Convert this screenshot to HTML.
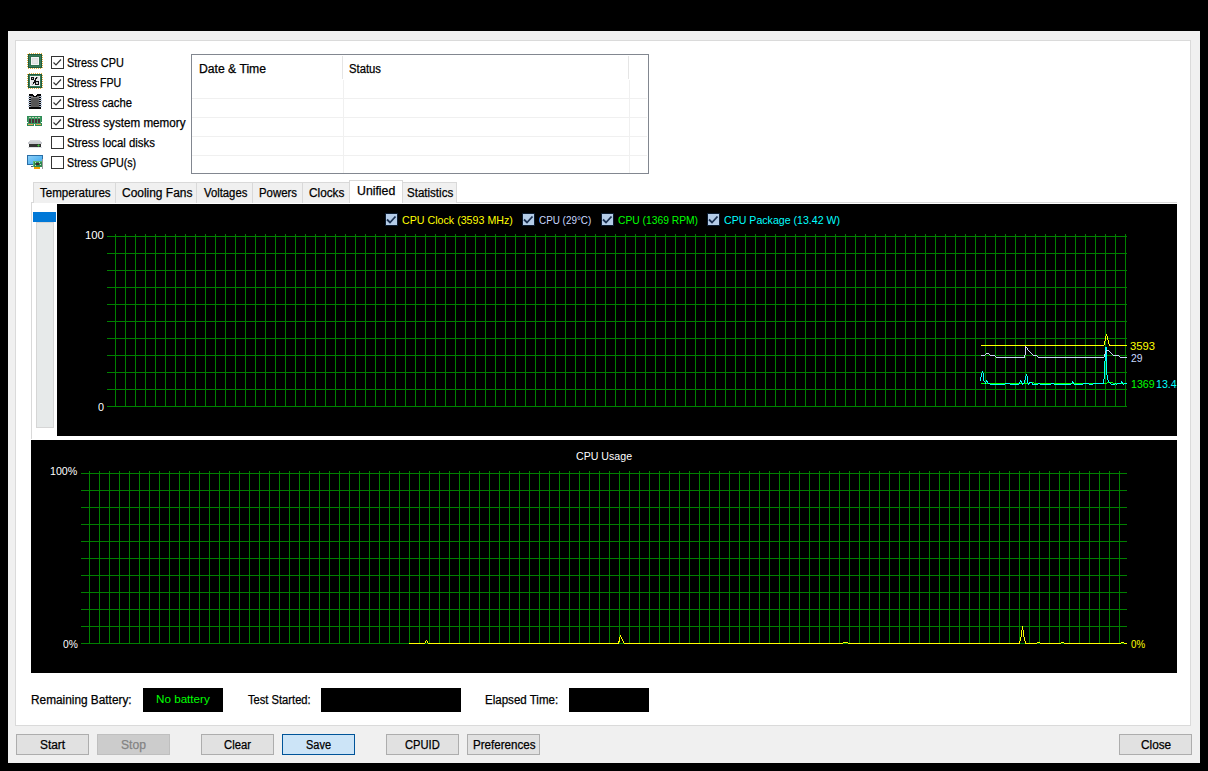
<!DOCTYPE html><html><head><meta charset="utf-8"><style>
html,body{margin:0;padding:0}
body{background:#000;width:1208px;height:771px;overflow:hidden;position:relative;font-family:"Liberation Sans", sans-serif}
.a{position:absolute;box-sizing:border-box}
.t{position:absolute;white-space:nowrap;line-height:15px;font-family:"Liberation Sans", sans-serif;transform-origin:0 0}
.cb{position:absolute;width:13px;height:13px;box-sizing:border-box;border:1px solid #333;background:#fff}
.btn{position:absolute;box-sizing:border-box;top:734px;width:73px;height:21px;border:1px solid #adadad;background:#e1e1e1}
.tab{position:absolute;box-sizing:border-box;top:182px;height:21px;border:1px solid #d9d9d9;border-bottom:none;background:#f0f0f0}
svg{position:absolute;left:0;top:0}
</style></head><body>

<div class="a" style="left:8px;top:31px;width:1192px;height:732px;background:#f0f0f0"></div>
<div class="a" style="left:15px;top:40px;width:1176px;height:686px;background:#fff;border:1px solid #dadada"></div>
<div class="cb" style="left:51px;top:56px"></div>
<div class="t" style="left:66.99px;top:56px;font-size:12px;color:#000;-webkit-text-stroke:0.25px currentColor;transform:scaleX(0.9066);">Stress CPU</div>
<div class="cb" style="left:51px;top:76px"></div>
<div class="t" style="left:67.02px;top:76px;font-size:12px;color:#000;-webkit-text-stroke:0.25px currentColor;transform:scaleX(0.8833);">Stress FPU</div>
<div class="cb" style="left:51px;top:96px"></div>
<div class="t" style="left:67.06px;top:96px;font-size:12px;color:#000;-webkit-text-stroke:0.25px currentColor;transform:scaleX(0.9368);">Stress cache</div>
<div class="cb" style="left:51px;top:116px"></div>
<div class="t" style="left:67.03px;top:116px;font-size:12px;color:#000;-webkit-text-stroke:0.25px currentColor;transform:scaleX(0.9711);">Stress system memory</div>
<div class="cb" style="left:51px;top:136px"></div>
<div class="t" style="left:67.05px;top:136px;font-size:12px;color:#000;-webkit-text-stroke:0.25px currentColor;transform:scaleX(0.9484);">Stress local disks</div>
<div class="cb" style="left:51px;top:156px"></div>
<div class="t" style="left:67.11px;top:156px;font-size:12px;color:#000;-webkit-text-stroke:0.25px currentColor;transform:scaleX(0.8947);">Stress GPU(s)</div>
<svg width="1208" height="771"><path d="M53.5 62.5 L56 65 L61 59.5" stroke="#333" stroke-width="1.2" fill="none"/><path d="M53.5 82.5 L56 85 L61 79.5" stroke="#333" stroke-width="1.2" fill="none"/><path d="M53.5 102.5 L56 105 L61 99.5" stroke="#333" stroke-width="1.2" fill="none"/><path d="M53.5 122.5 L56 125 L61 119.5" stroke="#333" stroke-width="1.2" fill="none"/></svg>
<div class="a" style="left:191px;top:54px;width:458px;height:120px;border:1px solid #828790;background:#fff"></div>
<div class="t" style="left:198.88px;top:62px;font-size:12px;color:#000;-webkit-text-stroke:0.25px currentColor;transform:scaleX(1.0154);">Date &amp; Time</div>
<div class="t" style="left:349.16px;top:62px;font-size:12px;color:#000;-webkit-text-stroke:0.25px currentColor;transform:scaleX(0.9394);">Status</div>
<svg width="1208" height="771"><rect x="342" y="56" width="1" height="23" fill="#e5e5e5"/><rect x="628" y="56" width="1" height="23" fill="#e5e5e5"/><rect x="192" y="98" width="455" height="1" fill="#f0f0f0"/><rect x="192" y="117" width="455" height="1" fill="#f0f0f0"/><rect x="192" y="136" width="455" height="1" fill="#f0f0f0"/><rect x="192" y="155" width="455" height="1" fill="#f0f0f0"/><rect x="343" y="80" width="1" height="93" fill="#f0f0f0"/><rect x="629" y="80" width="1" height="93" fill="#f0f0f0"/></svg>
<div class="a" style="left:31px;top:202px;width:1146px;height:237px;border:1px solid #d9d9d9;border-right:none;border-bottom:none;background:#fff"></div>
<div class="tab" style="left:33px;width:83px"></div>
<div class="tab" style="left:115px;width:82px"></div>
<div class="tab" style="left:196px;width:57px"></div>
<div class="tab" style="left:252px;width:51px"></div>
<div class="tab" style="left:302px;width:48px"></div>
<div class="tab" style="left:402px;width:55px"></div>
<div class="tab" style="left:349px;width:54px;top:180px;height:23px;background:#fff"></div>
<div class="t" style="left:40.20px;top:186px;font-size:12px;color:#000;-webkit-text-stroke:0.25px currentColor;transform:scaleX(0.9630);">Temperatures</div>
<div class="t" style="left:122.20px;top:186px;font-size:12px;color:#000;-webkit-text-stroke:0.25px currentColor;transform:scaleX(0.9957);">Cooling Fans</div>
<div class="t" style="left:204.10px;top:186px;font-size:12px;color:#000;-webkit-text-stroke:0.25px currentColor;transform:scaleX(0.9413);">Voltages</div>
<div class="t" style="left:259.35px;top:186px;font-size:12px;color:#000;-webkit-text-stroke:0.25px currentColor;transform:scaleX(0.9487);">Powers</div>
<div class="t" style="left:309.22px;top:186px;font-size:12px;color:#000;-webkit-text-stroke:0.25px currentColor;transform:scaleX(0.9829);">Clocks</div>
<div class="t" style="left:357.07px;top:184px;font-size:12px;color:#000;-webkit-text-stroke:0.25px currentColor;transform:scaleX(1.0250);">Unified</div>
<div class="t" style="left:407.04px;top:186px;font-size:12px;color:#000;-webkit-text-stroke:0.25px currentColor;transform:scaleX(0.9617);">Statistics</div>
<div class="a" style="left:36px;top:222px;width:18px;height:206px;background:#e7eaea;border:1px solid #d6d6d6"></div>
<div class="a" style="left:33px;top:212px;width:23px;height:10px;background:#0078d7"></div>
<div class="a" style="left:57px;top:204px;width:1120px;height:232px;background:#000"></div>
<div class="a" style="left:31px;top:440px;width:1146px;height:233px;background:#000"></div>
<svg width="1208" height="771"><path d="M107 236h1020v1h-1020zM107 253h1020v1h-1020zM107 270h1020v1h-1020zM107 287h1020v1h-1020zM107 304h1020v1h-1020zM107 321h1020v1h-1020zM107 338h1020v1h-1020zM107 355h1020v1h-1020zM107 372h1020v1h-1020zM107 389h1020v1h-1020zM107 406h1020v1h-1020zM115 234h1v173h-1zM125 234h1v173h-1zM135 234h1v173h-1zM145 234h1v173h-1zM155 234h1v173h-1zM165 234h1v173h-1zM175 234h1v173h-1zM185 234h1v173h-1zM195 234h1v173h-1zM205 234h1v173h-1zM215 234h1v173h-1zM225 234h1v173h-1zM235 234h1v173h-1zM245 234h1v173h-1zM255 234h1v173h-1zM265 234h1v173h-1zM275 234h1v173h-1zM285 234h1v173h-1zM295 234h1v173h-1zM305 234h1v173h-1zM315 234h1v173h-1zM325 234h1v173h-1zM335 234h1v173h-1zM345 234h1v173h-1zM355 234h1v173h-1zM365 234h1v173h-1zM375 234h1v173h-1zM385 234h1v173h-1zM395 234h1v173h-1zM405 234h1v173h-1zM415 234h1v173h-1zM425 234h1v173h-1zM435 234h1v173h-1zM445 234h1v173h-1zM455 234h1v173h-1zM465 234h1v173h-1zM475 234h1v173h-1zM485 234h1v173h-1zM495 234h1v173h-1zM505 234h1v173h-1zM515 234h1v173h-1zM525 234h1v173h-1zM535 234h1v173h-1zM545 234h1v173h-1zM555 234h1v173h-1zM565 234h1v173h-1zM575 234h1v173h-1zM585 234h1v173h-1zM595 234h1v173h-1zM605 234h1v173h-1zM615 234h1v173h-1zM625 234h1v173h-1zM635 234h1v173h-1zM645 234h1v173h-1zM655 234h1v173h-1zM665 234h1v173h-1zM675 234h1v173h-1zM685 234h1v173h-1zM695 234h1v173h-1zM705 234h1v173h-1zM715 234h1v173h-1zM725 234h1v173h-1zM735 234h1v173h-1zM745 234h1v173h-1zM755 234h1v173h-1zM765 234h1v173h-1zM775 234h1v173h-1zM785 234h1v173h-1zM795 234h1v173h-1zM805 234h1v173h-1zM815 234h1v173h-1zM825 234h1v173h-1zM835 234h1v173h-1zM845 234h1v173h-1zM855 234h1v173h-1zM865 234h1v173h-1zM875 234h1v173h-1zM885 234h1v173h-1zM895 234h1v173h-1zM905 234h1v173h-1zM915 234h1v173h-1zM925 234h1v173h-1zM935 234h1v173h-1zM945 234h1v173h-1zM955 234h1v173h-1zM965 234h1v173h-1zM975 234h1v173h-1zM985 234h1v173h-1zM995 234h1v173h-1zM1005 234h1v173h-1zM1015 234h1v173h-1zM1025 234h1v173h-1zM1035 234h1v173h-1zM1045 234h1v173h-1zM1055 234h1v173h-1zM1065 234h1v173h-1zM1075 234h1v173h-1zM1085 234h1v173h-1zM1095 234h1v173h-1zM1105 234h1v173h-1zM1115 234h1v173h-1zM1125 234h1v173h-1zM81 473h1046v1h-1046zM81 490h1046v1h-1046zM81 507h1046v1h-1046zM81 524h1046v1h-1046zM81 541h1046v1h-1046zM81 558h1046v1h-1046zM81 575h1046v1h-1046zM81 592h1046v1h-1046zM81 609h1046v1h-1046zM81 626h1046v1h-1046zM81 643h1046v1h-1046zM89 471h1v173h-1zM99 471h1v173h-1zM109 471h1v173h-1zM119 471h1v173h-1zM129 471h1v173h-1zM139 471h1v173h-1zM149 471h1v173h-1zM159 471h1v173h-1zM169 471h1v173h-1zM179 471h1v173h-1zM189 471h1v173h-1zM199 471h1v173h-1zM209 471h1v173h-1zM219 471h1v173h-1zM229 471h1v173h-1zM239 471h1v173h-1zM249 471h1v173h-1zM259 471h1v173h-1zM269 471h1v173h-1zM279 471h1v173h-1zM289 471h1v173h-1zM299 471h1v173h-1zM309 471h1v173h-1zM319 471h1v173h-1zM329 471h1v173h-1zM339 471h1v173h-1zM349 471h1v173h-1zM359 471h1v173h-1zM369 471h1v173h-1zM379 471h1v173h-1zM389 471h1v173h-1zM399 471h1v173h-1zM409 471h1v173h-1zM419 471h1v173h-1zM429 471h1v173h-1zM439 471h1v173h-1zM449 471h1v173h-1zM459 471h1v173h-1zM469 471h1v173h-1zM479 471h1v173h-1zM489 471h1v173h-1zM499 471h1v173h-1zM509 471h1v173h-1zM519 471h1v173h-1zM529 471h1v173h-1zM539 471h1v173h-1zM549 471h1v173h-1zM559 471h1v173h-1zM569 471h1v173h-1zM579 471h1v173h-1zM589 471h1v173h-1zM599 471h1v173h-1zM609 471h1v173h-1zM619 471h1v173h-1zM629 471h1v173h-1zM639 471h1v173h-1zM649 471h1v173h-1zM659 471h1v173h-1zM669 471h1v173h-1zM679 471h1v173h-1zM689 471h1v173h-1zM699 471h1v173h-1zM709 471h1v173h-1zM719 471h1v173h-1zM729 471h1v173h-1zM739 471h1v173h-1zM749 471h1v173h-1zM759 471h1v173h-1zM769 471h1v173h-1zM779 471h1v173h-1zM789 471h1v173h-1zM799 471h1v173h-1zM809 471h1v173h-1zM819 471h1v173h-1zM829 471h1v173h-1zM839 471h1v173h-1zM849 471h1v173h-1zM859 471h1v173h-1zM869 471h1v173h-1zM879 471h1v173h-1zM889 471h1v173h-1zM899 471h1v173h-1zM909 471h1v173h-1zM919 471h1v173h-1zM929 471h1v173h-1zM939 471h1v173h-1zM949 471h1v173h-1zM959 471h1v173h-1zM969 471h1v173h-1zM979 471h1v173h-1zM989 471h1v173h-1zM999 471h1v173h-1zM1009 471h1v173h-1zM1019 471h1v173h-1zM1029 471h1v173h-1zM1039 471h1v173h-1zM1049 471h1v173h-1zM1059 471h1v173h-1zM1069 471h1v173h-1zM1079 471h1v173h-1zM1089 471h1v173h-1zM1099 471h1v173h-1zM1109 471h1v173h-1zM1119 471h1v173h-1z" fill="#008000"/></svg>
<div class="a" style="left:385px;top:213px;width:13px;height:13px;background:#b4cce8;border:1px solid #0c1c30"></div>
<div class="a" style="left:522px;top:213px;width:13px;height:13px;background:#b4cce8;border:1px solid #0c1c30"></div>
<div class="a" style="left:601px;top:213px;width:13px;height:13px;background:#b4cce8;border:1px solid #0c1c30"></div>
<div class="a" style="left:707px;top:213px;width:13px;height:13px;background:#b4cce8;border:1px solid #0c1c30"></div>
<svg width="1208" height="771"><path d="M387 219.5 L390 222.5 L395.5 216.5" stroke="#1a3050" stroke-width="1.8" fill="none"/><path d="M524 219.5 L527 222.5 L532.5 216.5" stroke="#1a3050" stroke-width="1.8" fill="none"/><path d="M603 219.5 L606 222.5 L611.5 216.5" stroke="#1a3050" stroke-width="1.8" fill="none"/><path d="M709 219.5 L712 222.5 L717.5 216.5" stroke="#1a3050" stroke-width="1.8" fill="none"/></svg>
<div class="t" style="left:401.63px;top:213px;font-size:11px;color:#ffff00;transform:scaleX(0.9699);">CPU Clock (3593 MHz)</div>
<div class="t" style="left:538.80px;top:213px;font-size:11px;color:#c8d8ff;transform:scaleX(0.8982);">CPU (29°C)</div>
<div class="t" style="left:617.77px;top:213px;font-size:11px;color:#00ff00;transform:scaleX(0.9345);">CPU (1369 RPM)</div>
<div class="t" style="left:723.64px;top:213px;font-size:11px;color:#00ffff;transform:scaleX(0.9639);">CPU Package (13.42 W)</div>
<div class="t" style="left:85.17px;top:228px;font-size:11px;color:#fff;transform:scaleX(1.0294);">100</div>
<div class="t" style="left:97.90px;top:400px;font-size:11px;color:#fff;transform:scaleX(0.9833);">0</div>
<div class="t" style="left:576.24px;top:449px;font-size:11px;color:#fff;transform:scaleX(0.9649);">CPU Usage</div>
<div class="t" style="left:50.33px;top:464px;font-size:11px;color:#fff;transform:scaleX(0.9704);">100%</div>
<div class="t" style="left:62.80px;top:637px;font-size:11px;color:#fff;transform:scaleX(0.9312);">0%</div>
<div class="t" style="left:1130.08px;top:339px;font-size:11px;color:#ffff00;transform:scaleX(1.0174);">3593</div>
<div class="t" style="left:1131.10px;top:351px;font-size:11px;color:#c8d8ff;transform:scaleX(0.9417);">29</div>
<div class="t" style="left:1130.53px;top:377px;font-size:11px;color:#00ff00;transform:scaleX(0.9652);">1369</div>
<div class="t" style="left:1131.20px;top:637px;font-size:11px;color:#ffff00;transform:scaleX(0.8875);">0%</div>
<div class="a" style="left:1156px;top:370px;width:21px;height:20px;overflow:hidden"><div class="t" style="left:-0.07px;top:7px;font-size:11px;color:#00ffff;transform:scaleX(0.9652)">13.42</div></div>
<svg width="1208" height="771"><path d="M981 383h48v1h-48zM1034 383h73v1h-73zM1113 383h14v1h-14zM1029 382h5v1h-5zM1107 382h6v1h-6z" fill="#00ff00"/><path d="M981 374h1v1h-1zM983 374h1v1h-1zM1026 374h1v1h-1zM1104 374h1v1h-1zM1106 374h1v1h-1zM981 373h1v1h-1zM983 373h1v1h-1zM1104 373h1v1h-1zM1106 373h1v1h-1zM985 382h1v1h-1zM987 382h1v1h-1zM1019 382h1v1h-1zM1021 382h1v1h-1zM1024 382h1v1h-1zM1027 382h1v1h-1zM1029 382h3v1h-3zM1072 382h2v1h-2zM1103 382h1v1h-1zM1109 382h1v1h-1zM1121 382h2v1h-2zM990 384h15v1h-15zM1010 384h9v1h-9zM1022 384h1v1h-1zM1028 384h1v1h-1zM1032 384h6v1h-6zM1040 384h11v1h-11zM1054 384h17v1h-17zM1074 384h9v1h-9zM1089 384h4v1h-4zM1111 384h4v1h-4zM1116 384h1v1h-1zM1123 384h1v1h-1zM981 375h1v1h-1zM983 375h1v1h-1zM1026 375h1v1h-1zM1104 375h1v1h-1zM1107 375h1v1h-1zM1104 366h1v1h-1zM1106 366h1v1h-1zM985 383h1v1h-1zM988 383h2v1h-2zM1005 383h5v1h-5zM1019 383h1v1h-1zM1022 383h2v1h-2zM1028 383h2v1h-2zM1032 383h1v1h-1zM1038 383h2v1h-2zM1051 383h3v1h-3zM1071 383h1v1h-1zM1073 383h1v1h-1zM1083 383h6v1h-6zM1093 383h11v1h-11zM1110 383h1v1h-1zM1115 383h1v1h-1zM1117 383h4v1h-4zM1122 383h1v1h-1zM1124 383h3v1h-3zM1105 349h2v1h-2zM1105 358h2v1h-2zM1105 357h2v1h-2zM980 379h1v1h-1zM983 379h1v1h-1zM1025 379h1v1h-1zM1027 379h1v1h-1zM1103 379h1v1h-1zM1107 379h1v1h-1zM984 381h1v1h-1zM986 381h2v1h-2zM1020 381h2v1h-2zM1024 381h1v1h-1zM1027 381h1v1h-1zM1072 381h1v1h-1zM1103 381h1v1h-1zM1108 381h1v1h-1zM1121 381h1v1h-1zM980 377h1v1h-1zM983 377h1v1h-1zM1025 377h1v1h-1zM1027 377h1v1h-1zM1104 377h1v1h-1zM1107 377h1v1h-1zM1104 368h1v1h-1zM1106 368h1v1h-1zM1105 351h2v1h-2zM1105 360h2v1h-2zM1105 350h2v1h-2zM1105 359h2v1h-2zM980 380h1v1h-1zM983 380h1v1h-1zM986 380h1v1h-1zM1020 380h1v1h-1zM1024 380h1v1h-1zM1027 380h1v1h-1zM1103 380h1v1h-1zM1108 380h1v1h-1zM1104 361h1v1h-1zM1106 361h1v1h-1zM982 372h1v1h-1zM1104 372h1v1h-1zM1106 372h1v1h-1zM1104 370h1v1h-1zM1106 370h1v1h-1zM1105 353h2v1h-2zM1105 352h2v1h-2zM1104 363h1v1h-1zM1106 363h1v1h-1zM1105 355h2v1h-2zM1105 354h2v1h-2zM1104 365h1v1h-1zM1106 365h1v1h-1zM1105 348h2v1h-2zM1105 347h2v1h-2zM981 376h1v1h-1zM983 376h1v1h-1zM1025 376h1v1h-1zM1027 376h1v1h-1zM1104 376h1v1h-1zM1107 376h1v1h-1zM1105 356h2v1h-2zM980 378h1v1h-1zM983 378h1v1h-1zM1025 378h1v1h-1zM1027 378h1v1h-1zM1104 378h1v1h-1zM1107 378h1v1h-1zM1104 367h1v1h-1zM1106 367h1v1h-1zM982 371h1v1h-1zM1104 371h1v1h-1zM1106 371h1v1h-1zM1104 369h1v1h-1zM1106 369h1v1h-1zM1104 362h1v1h-1zM1106 362h1v1h-1zM1104 364h1v1h-1zM1106 364h1v1h-1z" fill="#00ffff"/><path d="M981 355h4v1h-4zM990 355h5v1h-5zM1024 355h1v1h-1zM1033 355h4v1h-4zM1104 355h1v1h-1zM1113 355h6v1h-6zM996 357h29v1h-29zM1038 357h66v1h-66zM1120 357h7v1h-7zM985 354h1v1h-1zM989 354h1v1h-1zM1025 354h1v1h-1zM1032 354h1v1h-1zM1104 354h1v1h-1zM1112 354h1v1h-1zM1025 352h1v1h-1zM1030 352h1v1h-1zM1105 352h1v1h-1zM1110 352h1v1h-1zM986 353h3v1h-3zM1025 353h1v1h-1zM1031 353h1v1h-1zM1105 353h1v1h-1zM1111 353h1v1h-1zM1025 347h2v1h-2zM1025 351h1v1h-1zM1029 351h1v1h-1zM1105 351h1v1h-1zM1109 351h1v1h-1zM1025 350h1v1h-1zM1028 350h1v1h-1zM1106 350h3v1h-3zM1025 349h1v1h-1zM1027 349h1v1h-1zM995 356h1v1h-1zM1024 356h1v1h-1zM1037 356h1v1h-1zM1104 356h1v1h-1zM1119 356h1v1h-1zM1025 346h1v1h-1zM1025 348h1v1h-1zM1027 348h1v1h-1z" fill="#c8d8f8"/><path d="M1105 338h1v1h-1zM1107 338h1v1h-1zM981 345h123v1h-123zM1109 345h18v1h-18zM1104 344h1v1h-1zM1109 344h1v1h-1zM1105 340h1v1h-1zM1108 340h1v1h-1zM1105 337h1v1h-1zM1107 337h1v1h-1zM1104 342h1v1h-1zM1108 342h1v1h-1zM1105 339h1v1h-1zM1107 339h1v1h-1zM1105 336h1v1h-1zM1107 336h1v1h-1zM1106 335h1v1h-1zM1104 341h1v1h-1zM1108 341h1v1h-1zM1104 343h1v1h-1zM1108 343h1v1h-1zM1106 334h1v1h-1z" fill="#ffff00"/><path d="M409 643h16v1h-16zM428 643h191v1h-191zM624 643h219v1h-219zM848 643h172v1h-172zM1025 643h12v1h-12zM1040 643h21v1h-21zM1064 643h57v1h-57zM1124 643h3v1h-3zM425 642h1v1h-1zM427 642h1v1h-1zM618 642h1v1h-1zM623 642h1v1h-1zM843 642h5v1h-5zM1019 642h1v1h-1zM1025 642h1v1h-1zM1037 642h3v1h-3zM1061 642h3v1h-3zM1121 642h3v1h-3zM1021 633h1v1h-1zM1023 633h1v1h-1zM619 637h1v1h-1zM621 637h1v1h-1zM1020 637h1v1h-1zM1024 637h1v1h-1zM1022 627h1v1h-1zM425 641h1v1h-1zM427 641h1v1h-1zM618 641h2v1h-2zM623 641h1v1h-1zM1019 641h1v1h-1zM1025 641h1v1h-1zM1021 634h1v1h-1zM1023 634h1v1h-1zM1022 626h1v1h-1zM619 639h1v1h-1zM622 639h1v1h-1zM1020 639h1v1h-1zM1024 639h1v1h-1zM619 638h1v1h-1zM621 638h1v1h-1zM1020 638h1v1h-1zM1024 638h1v1h-1zM426 640h1v1h-1zM619 640h1v1h-1zM622 640h1v1h-1zM1020 640h1v1h-1zM1024 640h1v1h-1zM1021 632h1v1h-1zM1023 632h1v1h-1zM620 636h1v1h-1zM1021 636h1v1h-1zM1023 636h1v1h-1zM1021 631h1v1h-1zM1023 631h1v1h-1zM1022 629h1v1h-1zM1022 628h1v1h-1zM620 635h1v1h-1zM1021 635h1v1h-1zM1023 635h1v1h-1zM1021 630h1v1h-1zM1023 630h1v1h-1z" fill="#ffff00"/></svg>
<div class="a" style="left:143px;top:688px;width:80px;height:24px;background:#000"></div>
<div class="a" style="left:321px;top:688px;width:140px;height:24px;background:#000"></div>
<div class="a" style="left:569px;top:688px;width:80px;height:24px;background:#000"></div>
<div class="t" style="left:31.31px;top:693px;font-size:12px;color:#000;-webkit-text-stroke:0.25px currentColor;transform:scaleX(0.9860);">Remaining Battery:</div>
<div class="t" style="left:156.24px;top:692px;font-size:11px;color:#00ff00;transform:scaleX(1.0600);">No battery</div>
<div class="t" style="left:247.70px;top:693px;font-size:12px;color:#000;-webkit-text-stroke:0.25px currentColor;transform:scaleX(0.9303);">Test Started:</div>
<div class="t" style="left:485.14px;top:693px;font-size:12px;color:#000;-webkit-text-stroke:0.25px currentColor;transform:scaleX(0.9622);">Elapsed Time:</div>
<div class="btn" style="left:16px;"></div>
<div class="btn" style="left:97px;background:#cccccc;border-color:#bfbfbf"></div>
<div class="btn" style="left:201px;"></div>
<div class="btn" style="left:282px;background:#cce4f7;border-color:#005499"></div>
<div class="btn" style="left:386px;"></div>
<div class="btn" style="left:467px;"></div>
<div class="btn" style="left:1119px;"></div>
<div class="t" style="left:39.71px;top:738px;font-size:12px;color:#000;-webkit-text-stroke:0.25px currentColor;transform:scaleX(0.9917);">Start</div>
<div class="t" style="left:120.89px;top:738px;font-size:12px;color:#838383;-webkit-text-stroke:0.25px currentColor;transform:scaleX(1.0087);">Stop</div>
<div class="t" style="left:224.46px;top:738px;font-size:12px;color:#000;-webkit-text-stroke:0.25px currentColor;transform:scaleX(0.9393);">Clear</div>
<div class="t" style="left:305.88px;top:738px;font-size:12px;color:#000;-webkit-text-stroke:0.25px currentColor;transform:scaleX(0.9154);">Save</div>
<div class="t" style="left:405.07px;top:738px;font-size:12px;color:#000;-webkit-text-stroke:0.25px currentColor;transform:scaleX(0.9306);">CPUID</div>
<div class="t" style="left:472.73px;top:738px;font-size:12px;color:#000;-webkit-text-stroke:0.25px currentColor;transform:scaleX(0.9667);">Preferences</div>
<div class="t" style="left:1141.32px;top:738px;font-size:12px;color:#000;-webkit-text-stroke:0.25px currentColor;transform:scaleX(0.9828);">Close</div>
<svg width="1208" height="771"><rect x="29" y="53" width="1" height="1" fill="#e3ad3c"/><rect x="28" y="68" width="1" height="1" fill="#e3ad3c"/><rect x="27" y="54" width="1" height="1" fill="#e3ad3c"/><rect x="42" y="55" width="1" height="1" fill="#e3ad3c"/><rect x="31" y="53" width="1" height="1" fill="#e3ad3c"/><rect x="30" y="68" width="1" height="1" fill="#e3ad3c"/><rect x="27" y="56" width="1" height="1" fill="#e3ad3c"/><rect x="42" y="57" width="1" height="1" fill="#e3ad3c"/><rect x="33" y="53" width="1" height="1" fill="#e3ad3c"/><rect x="32" y="68" width="1" height="1" fill="#e3ad3c"/><rect x="27" y="58" width="1" height="1" fill="#e3ad3c"/><rect x="42" y="59" width="1" height="1" fill="#e3ad3c"/><rect x="35" y="53" width="1" height="1" fill="#e3ad3c"/><rect x="34" y="68" width="1" height="1" fill="#e3ad3c"/><rect x="27" y="60" width="1" height="1" fill="#e3ad3c"/><rect x="42" y="61" width="1" height="1" fill="#e3ad3c"/><rect x="37" y="53" width="1" height="1" fill="#e3ad3c"/><rect x="36" y="68" width="1" height="1" fill="#e3ad3c"/><rect x="27" y="62" width="1" height="1" fill="#e3ad3c"/><rect x="42" y="63" width="1" height="1" fill="#e3ad3c"/><rect x="39" y="53" width="1" height="1" fill="#e3ad3c"/><rect x="38" y="68" width="1" height="1" fill="#e3ad3c"/><rect x="27" y="64" width="1" height="1" fill="#e3ad3c"/><rect x="42" y="65" width="1" height="1" fill="#e3ad3c"/><rect x="41" y="53" width="1" height="1" fill="#e3ad3c"/><rect x="40" y="68" width="1" height="1" fill="#e3ad3c"/><rect x="27" y="66" width="1" height="1" fill="#e3ad3c"/><rect x="42" y="67" width="1" height="1" fill="#e3ad3c"/><rect x="28" y="54" width="14" height="14" fill="#1e5a3c"/><rect x="29" y="55" width="12" height="12" fill="#3a7a58"/><rect x="30" y="56" width="10" height="10" fill="#2f6e4c"/><rect x="31" y="57" width="8" height="8" fill="#f4f4f4"/><rect x="32" y="58" width="6" height="6" fill="#dedede"/><rect x="33" y="59" width="4" height="4" fill="#e6e6e6"/><rect x="29" y="73" width="1" height="1" fill="#e3ad3c"/><rect x="28" y="88" width="1" height="1" fill="#e3ad3c"/><rect x="27" y="74" width="1" height="1" fill="#e3ad3c"/><rect x="42" y="75" width="1" height="1" fill="#e3ad3c"/><rect x="31" y="73" width="1" height="1" fill="#e3ad3c"/><rect x="30" y="88" width="1" height="1" fill="#e3ad3c"/><rect x="27" y="76" width="1" height="1" fill="#e3ad3c"/><rect x="42" y="77" width="1" height="1" fill="#e3ad3c"/><rect x="33" y="73" width="1" height="1" fill="#e3ad3c"/><rect x="32" y="88" width="1" height="1" fill="#e3ad3c"/><rect x="27" y="78" width="1" height="1" fill="#e3ad3c"/><rect x="42" y="79" width="1" height="1" fill="#e3ad3c"/><rect x="35" y="73" width="1" height="1" fill="#e3ad3c"/><rect x="34" y="88" width="1" height="1" fill="#e3ad3c"/><rect x="27" y="80" width="1" height="1" fill="#e3ad3c"/><rect x="42" y="81" width="1" height="1" fill="#e3ad3c"/><rect x="37" y="73" width="1" height="1" fill="#e3ad3c"/><rect x="36" y="88" width="1" height="1" fill="#e3ad3c"/><rect x="27" y="82" width="1" height="1" fill="#e3ad3c"/><rect x="42" y="83" width="1" height="1" fill="#e3ad3c"/><rect x="39" y="73" width="1" height="1" fill="#e3ad3c"/><rect x="38" y="88" width="1" height="1" fill="#e3ad3c"/><rect x="27" y="84" width="1" height="1" fill="#e3ad3c"/><rect x="42" y="85" width="1" height="1" fill="#e3ad3c"/><rect x="41" y="73" width="1" height="1" fill="#e3ad3c"/><rect x="40" y="88" width="1" height="1" fill="#e3ad3c"/><rect x="27" y="86" width="1" height="1" fill="#e3ad3c"/><rect x="42" y="87" width="1" height="1" fill="#e3ad3c"/><rect x="28" y="74" width="14" height="14" fill="#1e5a3c"/><rect x="29" y="75" width="12" height="12" fill="#3a7a58"/><rect x="30" y="76" width="10" height="10" fill="#2f6e4c"/><rect x="30" y="76" width="10" height="10" fill="#f2f2f2"/><rect x="31" y="77" width="8" height="8" fill="#e4e4e4"/><rect x="31" y="77" width="1" height="1" fill="#111"/><rect x="32" y="77" width="1" height="1" fill="#111"/><rect x="33" y="77" width="1" height="1" fill="#111"/><rect x="36" y="77" width="1" height="1" fill="#111"/><rect x="31" y="78" width="1" height="1" fill="#111"/><rect x="33" y="78" width="1" height="1" fill="#111"/><rect x="35" y="78" width="1" height="1" fill="#111"/><rect x="36" y="78" width="1" height="1" fill="#111"/><rect x="31" y="79" width="1" height="1" fill="#111"/><rect x="32" y="79" width="1" height="1" fill="#111"/><rect x="33" y="79" width="1" height="1" fill="#111"/><rect x="35" y="79" width="1" height="1" fill="#111"/><rect x="34" y="80" width="1" height="1" fill="#111"/><rect x="35" y="80" width="1" height="1" fill="#111"/><rect x="34" y="81" width="1" height="1" fill="#111"/><rect x="35" y="81" width="1" height="1" fill="#111"/><rect x="36" y="81" width="1" height="1" fill="#111"/><rect x="37" y="81" width="1" height="1" fill="#111"/><rect x="38" y="81" width="1" height="1" fill="#111"/><rect x="33" y="82" width="1" height="1" fill="#111"/><rect x="34" y="82" width="1" height="1" fill="#111"/><rect x="35" y="82" width="1" height="1" fill="#111"/><rect x="38" y="82" width="1" height="1" fill="#111"/><rect x="33" y="83" width="1" height="1" fill="#111"/><rect x="35" y="83" width="1" height="1" fill="#111"/><rect x="38" y="83" width="1" height="1" fill="#111"/><rect x="35" y="84" width="1" height="1" fill="#111"/><rect x="36" y="84" width="1" height="1" fill="#111"/><rect x="37" y="84" width="1" height="1" fill="#111"/><rect x="38" y="84" width="1" height="1" fill="#111"/><rect x="32" y="78" width="1" height="1" fill="#bbb"/><rect x="36" y="82" width="2" height="2" fill="#ccc"/><rect x="37" y="77" width="1" height="1" fill="#888"/><rect x="32" y="84" width="1" height="1" fill="#999"/><rect x="29" y="94" width="12" height="15" fill="#050505"/><rect x="31" y="96" width="8" height="11" fill="#5c5c5c"/><rect x="31" y="96" width="2" height="2" fill="#7a7a7a"/><rect x="37" y="96" width="2" height="2" fill="#7a7a7a"/><rect x="33" y="97" width="4" height="1" fill="#7a7a7a"/><rect x="32" y="98" width="6" height="8" fill="#555"/><rect x="33" y="94" width="4" height="1" fill="#fff"/><rect x="34" y="95" width="2" height="1" fill="#fff"/><rect x="33" y="96" width="4" height="1" fill="#050505"/><rect x="28" y="96" width="2" height="1" fill="#b4c2d6"/><rect x="30" y="96" width="1" height="1" fill="#8a96a8"/><rect x="40" y="96" width="2" height="1" fill="#b4c2d6"/><rect x="39" y="96" width="1" height="1" fill="#8a96a8"/><rect x="28" y="98" width="2" height="1" fill="#b4c2d6"/><rect x="30" y="98" width="1" height="1" fill="#8a96a8"/><rect x="40" y="98" width="2" height="1" fill="#b4c2d6"/><rect x="39" y="98" width="1" height="1" fill="#8a96a8"/><rect x="28" y="100" width="2" height="1" fill="#b4c2d6"/><rect x="30" y="100" width="1" height="1" fill="#8a96a8"/><rect x="40" y="100" width="2" height="1" fill="#b4c2d6"/><rect x="39" y="100" width="1" height="1" fill="#8a96a8"/><rect x="28" y="102" width="2" height="1" fill="#b4c2d6"/><rect x="30" y="102" width="1" height="1" fill="#8a96a8"/><rect x="40" y="102" width="2" height="1" fill="#b4c2d6"/><rect x="39" y="102" width="1" height="1" fill="#8a96a8"/><rect x="28" y="104" width="2" height="1" fill="#b4c2d6"/><rect x="30" y="104" width="1" height="1" fill="#8a96a8"/><rect x="40" y="104" width="2" height="1" fill="#b4c2d6"/><rect x="39" y="104" width="1" height="1" fill="#8a96a8"/><rect x="28" y="106" width="2" height="1" fill="#b4c2d6"/><rect x="30" y="106" width="1" height="1" fill="#8a96a8"/><rect x="40" y="106" width="2" height="1" fill="#b4c2d6"/><rect x="39" y="106" width="1" height="1" fill="#8a96a8"/><rect x="27" y="116" width="15" height="10" fill="#2f8a55"/><rect x="28" y="117" width="13" height="8" fill="#3c9c64"/><rect x="27" y="122" width="1" height="1" fill="#fff"/><rect x="41" y="122" width="1" height="1" fill="#fff"/><rect x="34" y="124" width="1" height="2" fill="#fff"/><rect x="29" y="117" width="2" height="1" fill="#c8d4b8"/><rect x="29" y="119" width="2" height="4" fill="#4a3038"/><rect x="32" y="117" width="2" height="1" fill="#c8d4b8"/><rect x="32" y="119" width="2" height="4" fill="#4a3038"/><rect x="35" y="117" width="2" height="1" fill="#c8d4b8"/><rect x="35" y="119" width="2" height="4" fill="#4a3038"/><rect x="38" y="117" width="2" height="1" fill="#c8d4b8"/><rect x="38" y="119" width="2" height="4" fill="#4a3038"/><rect x="28" y="124" width="5" height="1" fill="#e8a050"/><rect x="36" y="124" width="5" height="1" fill="#e8a050"/><rect x="30" y="140" width="10" height="1" fill="#d6d8dc"/><rect x="29" y="141" width="12" height="3" fill="#cfd1d5"/><rect x="28" y="142" width="14" height="2" fill="#c8cacf"/><rect x="29" y="144" width="12" height="3" fill="#333333"/><rect x="28" y="147" width="14" height="1" fill="#dde0e4"/><rect x="38" y="145" width="1" height="1" fill="#40ff40"/><rect x="37" y="145" width="3" height="1" fill="#40c040" fill-opacity="0.6"/><rect x="38" y="144" width="1" height="3" fill="#40c040" fill-opacity="0.6"/><defs><linearGradient id="gg" x1="0" y1="0" x2="1" y2="1"><stop offset="0" stop-color="#8ccff8"/><stop offset="1" stop-color="#3aa8f0"/></linearGradient></defs><rect x="27" y="155" width="16" height="10" fill="#2b6ea6"/><rect x="28" y="156" width="14" height="8" fill="url(#gg)"/><rect x="42" y="159" width="1" height="10" fill="#9a9a9a"/><rect x="31" y="166" width="2" height="1" fill="#506080"/><rect x="33" y="161" width="9" height="6" fill="#2f8a4f"/><rect x="33" y="161" width="9" height="1" fill="#5cb874"/><rect x="33" y="161" width="1" height="6" fill="#5cb874"/><rect x="36" y="163" width="3" height="2" fill="#3a2830"/><rect x="35" y="162" width="1" height="1" fill="#d0d8d0"/><rect x="39" y="162" width="1" height="1" fill="#d0d8d0"/><rect x="35" y="165" width="1" height="1" fill="#d0d8d0"/><rect x="40" y="164" width="1" height="1" fill="#d0d8d0"/><rect x="34" y="167" width="6" height="2" fill="#f0a000"/></svg>
</body></html>
